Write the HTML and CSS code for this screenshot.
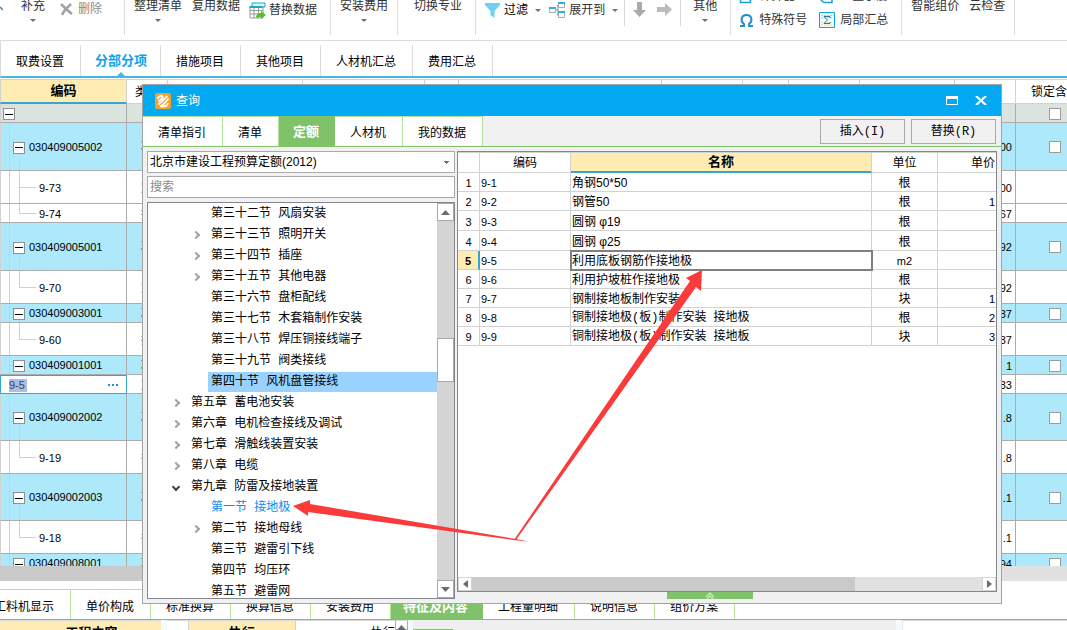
FILE: index.html
```html
<!DOCTYPE html>
<html lang="zh-CN">
<head>
<meta charset="utf-8">
<title>查询</title>
<link rel="stylesheet" href="styles.css">
</head>
<body>
<div class="app">
  <header class="ribbon">
    <div class="group g-edit">
      <svg class="cut" width="3" height="12" viewBox="0 0 3 12"><path d="M0 7l3 3" stroke="#4a7fa8" stroke-width="1.5"/></svg>
      <button class="tool stack">补充<i class="caret"></i></button>
      <button class="tool dim"><svg width="13" height="13" viewBox="0 0 13 13"><path d="M1 1c3 3 7 7 11 10M11 1C8 4 4 7 2 12" fill="none" stroke="#a3a3a3" stroke-width="2.6"/></svg>删除</button>
    </div>
    <div class="group g-list">
      <button class="tool stack">整理清单<i class="caret"></i></button>
      <button class="tool stack">复用数据</button>
      <button class="tool low tight"><svg width="17" height="17" viewBox="0 0 17 17"><path d="M1 5h13v11H1zM1 8.500h13M1 12h13M5 5v11M9.500 5v11" fill="#fff" stroke="#999"/><path d="M3 1h13v4H3z" fill="#d8f5fb" stroke="#19aacb"/><path d="M.5 4h13v2H.5z" fill="#19aacb"/><path d="M7 16c0-4 2-5 5-5V9l5 4-5 4v-2c-2 0-4 0-5 1z" fill="#55c12f"/></svg>替换数据</button>
    </div>
    <div class="group g-fee"><button class="tool stack">安装费用<i class="caret"></i></button></div>
    <div class="group g-major"><button class="tool stack">切换专业</button></div>
    <div class="group g-filter short">
      <button class="tool low strong"><svg width="15" height="15" viewBox="0 0 15 15"><path d="M0 0h15v2L9.500 8v7l-4-3V8L0 2z" fill="#6fd0f2"/></svg>过滤<i class="caret beside"></i></button>
      <button class="tool low"><svg width="16" height="16" viewBox="0 0 16 16"><path d="M6 8h3M9 3.500V13M8 3.500h2M8 13h2" stroke="#888" fill="none"/><g fill="#fff" stroke="#aaa"><path d="M.5 5.500h6v5h-6zM9.500 1.500h6v4h-6zM9.500 10.500h6v5h-6z"/></g><path d="M0 5h7v2H0zM9 0h7v2H9zM9 9h7v2H9z" fill="#2eb1e2"/></svg>展开到<i class="caret beside"></i></button>
    </div>
    <div class="group g-move short">
      <button class="tool" aria-label="下移"><svg width="13" height="15" viewBox="0 0 13 15"><path d="M4 0h5v8h4l-6.500 7L0 8h4z" fill="#aaa"/></svg></button>
      <button class="tool" aria-label="右移"><svg width="15" height="15" viewBox="0 0 15 15"><path d="M0 5h8V1l7 6.500L8 14v-4H0z" fill="#bcbcbc"/></svg></button>
    </div>
    <div class="group g-other"><button class="tool stack">其他<i class="caret"></i></button></div>
    <div class="group g-tools">
      <button class="tool"><svg width="15" height="15" viewBox="0 0 15 15"><path d="M1.500.5h10v13h-10z" fill="#fff" stroke="#19a0d8" stroke-width="1.500"/></svg>计算器</button>
      <button class="tool"><svg width="16" height="15" viewBox="0 0 16 15"><path d="M2 1h11v12.500H5L2 11z" fill="#fff" stroke="#19a0d8" stroke-width="1.500"/></svg>五金手册</button>
      <button class="tool"><svg width="15" height="15" viewBox="0 0 15 15"><path d="M1 13h4v-2C1 8 2 2 7.500 2S14 8 10 11v2h4" fill="none" stroke="#2390cc" stroke-width="2"/></svg>特殊符号</button>
      <button class="tool"><svg width="16" height="16" viewBox="0 0 16 16"><path d="M.5.5h15v15H.5z" fill="#eefaff" stroke="#0ba4e2"/><path d="M2 3.500h12M2 6h12" stroke="#8ed5f2" stroke-dasharray="2 1"/><path d="M2 10.500h12M2 13h12" stroke="#f0dba0" stroke-dasharray="2 1"/><path d="M11 6V4.500H5L8.500 8 5 11.500h6V10" fill="none" stroke="#3d7286"/></svg>局部汇总</button>
    </div>
    <div class="group g-cloud">
      <button class="tool stack">智能组价</button>
      <button class="tool stack">云检查</button>
    </div>
  </header>

  <nav class="tabs main-tabs">
    <button>取费设置</button><button class="on">分部分项</button><button>措施项目</button><button>其他项目</button><button>人材机汇总</button><button>费用汇总</button>
  </nav>

  <main class="sheet">
    <table class="bill">
      <colgroup><col class="c-code"><col class="c-type"><col class="c-w1"><col class="c-w2"><col class="c-w3"><col class="c-w4"><col class="c-w5"><col class="c-w6"><col class="c-w7"><col class="c-w8"><col class="c-sum"><col class="c-lock"></colgroup>
      <thead><tr><th class="key">编码</th><th>类别</th><th></th><th></th><th></th><th></th><th></th><th></th><th></th><th></th><th></th><th>锁定含量</th></tr></thead>
      <tbody>
        <tr class="root"><td><button class="fold" aria-label="折叠"></button></td><td></td><td colspan="8"></td><td></td><td><input type="checkbox" aria-label="锁定"></td></tr>
        <tr class="item tall"><td><button class="fold" aria-label="折叠"></button>030409005002</td><td>项</td><td colspan="8"></td><td>00</td><td><input type="checkbox" aria-label="锁定"></td></tr>
        <tr class="sub mid"><td>9-73</td><td>定</td><td colspan="8"></td><td>00</td><td></td></tr>
        <tr class="sub last"><td>9-74</td><td>换</td><td colspan="8"></td><td>67</td><td></td></tr>
        <tr class="item tall"><td><button class="fold" aria-label="折叠"></button>030409005001</td><td>项</td><td colspan="8"></td><td>92</td><td><input type="checkbox" aria-label="锁定"></td></tr>
        <tr class="sub mid last"><td>9-70</td><td>定</td><td colspan="8"></td><td>92</td><td></td></tr>
        <tr class="item"><td><button class="fold" aria-label="折叠"></button>030409003001</td><td>项</td><td colspan="8"></td><td>37</td><td><input type="checkbox" aria-label="锁定"></td></tr>
        <tr class="sub mid last"><td>9-60</td><td>换</td><td colspan="8"></td><td>37</td><td></td></tr>
        <tr class="item"><td><button class="fold" aria-label="折叠"></button>030409001001</td><td>项</td><td colspan="8"></td><td>1</td><td><input type="checkbox" aria-label="锁定"></td></tr>
        <tr class="editing"><td><div class="editor"><input type="text" value="9-5" aria-label="编码"><button aria-label="更多"><svg width="11" height="3" viewBox="0 0 11 3"><path d="M0 0h2v2H0zM4 0h2v2H4zM8 0h2v2H8z" fill="#2a8fd0"/></svg></button></div></td><td>定</td><td colspan="8"></td><td>33</td><td></td></tr>
        <tr class="item high"><td><button class="fold" aria-label="折叠"></button>030409002002</td><td>项</td><td colspan="8"></td><td>.8</td><td><input type="checkbox" aria-label="锁定"></td></tr>
        <tr class="sub mid last"><td>9-19</td><td>换</td><td colspan="8"></td><td>.8</td><td></td></tr>
        <tr class="item high"><td><button class="fold" aria-label="折叠"></button>030409002003</td><td>项</td><td colspan="8"></td><td>.1</td><td><input type="checkbox" aria-label="锁定"></td></tr>
        <tr class="sub mid last"><td>9-18</td><td>换</td><td colspan="8"></td><td>.1</td><td></td></tr>
        <tr class="item"><td><button class="fold" aria-label="折叠"></button>030409008001</td><td>项</td><td colspan="8"></td><td>94</td><td><input type="checkbox" aria-label="锁定"></td></tr>
      </tbody>
    </table>
  </main>
  <div class="sheet-scroll"><span></span></div>

  <nav class="tabs sub-tabs">
    <button>工料机显示</button><button>单价构成</button><button>标准换算</button><button>换算信息</button><button>安装费用</button><button class="on">特征及内容</button><button>工程量明细</button><button>说明信息</button><button>组价方案</button>
  </nav>
  <footer class="detail">
    <div class="d-content">工程内容</div>
    <div class="d-mark"></div>
    <div class="d-name">执行</div>
    <div class="d-value">执行</div>
    <div class="d-up"><svg width="9" height="5" viewBox="0 0 9 5"><path d="M0 5l4.500-5L9 5z" fill="#666b78"/></svg></div>
    <div class="d-panel"><span></span></div>
    <div class="d-rest"></div>
  </footer>
</div>

<section class="dialog" role="dialog" aria-label="查询">
  <header class="title">
    <svg width="16" height="16" viewBox="0 0 16 16"><rect width="16" height="16" rx="2" fill="#f7a02c"/><path d="M2.500 6c1-3 4-4 5-2.500S5 7 3.500 8.500M3.500 11.500L12.500 3M5 13.500c3-1 7-6 8.500-8M6 13.500c4 .5 7-1 7-3.500" fill="none" stroke="#fff" stroke-width="1.800"/></svg>
    <h1>查询</h1>
    <button aria-label="最大化"><svg width="12" height="9" viewBox="0 0 12 9"><path d="M.5.5h11v8H.5z" fill="none" stroke="#fff"/><path d="M0 0h12v3H0z" fill="#fff"/></svg></button>
    <button aria-label="关闭"><svg width="12" height="9" viewBox="0 0 12 9"><path d="M1 0l10 9M11 0L1 9" stroke="#fff" stroke-width="2.200"/></svg></button>
  </header>
  <div class="bar">
    <nav class="tabs pick-tabs"><button>清单指引</button><button>清单</button><button class="on">定额</button><button>人材机</button><button>我的数据</button></nav>
    <div class="actions"><button>插入(I)</button><button>替换(R)</button></div>
  </div>
  <div class="body">
    <div class="side">
      <select aria-label="定额库"><option>北京市建设工程预算定额(2012)</option></select>
      <input class="search" type="text" placeholder="搜索" aria-label="搜索">
      <div class="tree">
        <ul>
          <li class="sec">第三十二节 风扇安装</li>
          <li class="sec more">第三十三节 照明开关</li>
          <li class="sec more">第三十四节 插座</li>
          <li class="sec more">第三十五节 其他电器</li>
          <li class="sec">第三十六节 盘柜配线</li>
          <li class="sec">第三十七节 木套箱制作安装</li>
          <li class="sec">第三十八节 焊压铜接线端子</li>
          <li class="sec">第三十九节 阀类接线</li>
          <li class="sec picked"><span>第四十节 风机盘管接线</span></li>
          <li class="more">第五章 蓄电池安装</li>
          <li class="more">第六章 电机检查接线及调试</li>
          <li class="more">第七章 滑触线装置安装</li>
          <li class="more">第八章 电缆</li>
          <li class="more open">第九章 防雷及接地装置</li>
          <li class="sec current">第一节 接地极</li>
          <li class="sec more">第二节 接地母线</li>
          <li class="sec">第三节 避雷引下线</li>
          <li class="sec">第四节 均压环</li>
          <li class="sec">第五节 避雷网</li>
        </ul>
        <div class="vscroll">
          <button aria-label="向上"><svg width="9" height="5" viewBox="0 0 9 5"><path d="M0 5l4.500-5L9 5z" fill="#666b78"/></svg></button>
          <div class="track"><span></span></div>
          <button aria-label="向下"><svg width="9" height="5" viewBox="0 0 9 5"><path d="M0 0l4.500 5L9 0z" fill="#666b78"/></svg></button>
        </div>
      </div>
    </div>
    <div class="result">
      <div class="pane">
        <table class="quota">
          <colgroup><col class="q-no"><col class="q-code"><col><col class="q-unit"><col class="q-price"></colgroup>
          <thead><tr><th></th><th>编码</th><th class="key">名称</th><th>单位</th><th class="price">单价</th></tr></thead>
          <tbody>
            <tr><td>1</td><td>9-1</td><td>角钢50*50</td><td>根</td><td></td></tr>
            <tr><td>2</td><td>9-2</td><td>钢管50</td><td>根</td><td>1</td></tr>
            <tr class="roomy"><td>3</td><td>9-3</td><td>圆钢 φ19</td><td>根</td><td></td></tr>
            <tr class="roomy"><td>4</td><td>9-4</td><td>圆钢 φ25</td><td>根</td><td></td></tr>
            <tr class="active"><td>5</td><td>9-5</td><td>利用底板钢筋作接地极</td><td class="latin">m2</td><td></td></tr>
            <tr><td>6</td><td>9-6</td><td>利用护坡桩作接地极</td><td>根</td><td></td></tr>
            <tr><td>7</td><td>9-7</td><td>钢制接地板制作安装</td><td>块</td><td>1</td></tr>
            <tr><td>8</td><td>9-8</td><td class="wide">铜制接地极(板)制作安装 接地极</td><td>根</td><td>2</td></tr>
            <tr><td>9</td><td>9-9</td><td class="wide">铜制接地极(板)制作安装 接地板</td><td>块</td><td>3</td></tr>
          </tbody>
        </table>
        <div class="hscroll">
          <button aria-label="向左"><svg width="5" height="8" viewBox="0 0 5 8"><path d="M5 0L0 4l5 4z" fill="#666b78"/></svg></button>
          <div class="track"><span></span></div>
          <button aria-label="向右"><svg width="5" height="8" viewBox="0 0 5 8"><path d="M0 0l5 4-5 4z" fill="#666b78"/></svg></button>
        </div>
      </div>
      <button class="handle" aria-label="展开"><svg width="10" height="7" viewBox="0 0 10 7"><path d="M1 5l4-4 4 4M2 7l3-3 3 3" fill="none" stroke="#c9ecbd" stroke-width="1.300"/></svg></button>
    </div>
  </div>
</section>

<svg class="marks" width="1067" height="630" viewBox="0 0 1067 630" aria-hidden="true">
  <g fill="#fb3b39"><path d="M293 506l17-6v4l206 35 13 2.500-16-1.500L308 512v4z"/><path d="M702 270l-16 8 4 3-176 259h2l180-253 5 4z"/></g>
</svg>
</body>
</html>
```
FILE: styles.css
```css
*, *::before, *::after { box-sizing: border-box; }

html, body { height: 100%; }

body {
  position: relative;
  margin: 0;
  overflow: hidden;
  background: #fff;
  color: #000;
  font: 12px/14px "Liberation Sans", "Noto Sans CJK SC", sans-serif;
}

button, input, select { font: inherit; color: inherit; margin: 0; }

button {
  border: 0;
  padding: 0;
  background: none;
  white-space: nowrap;
}

svg { display: block; flex: none; }

.app {
  display: flex;
  flex-direction: column;
  height: 100%;
}

/* ribbon */
.ribbon {
  display: flex;
  flex: none;
  height: 41px;
  overflow: hidden;
  border-bottom: 1px solid #dcdcdc;
  color: #333;
}

.group {
  display: flex;
  align-items: flex-start;
  flex: none;
  height: 35px;
  border-right: 1px solid #dcdcdc;
}

.group.short { height: 26px; }

.tool {
  display: flex;
  align-items: center;
  gap: 6px;
  height: 18px;
  line-height: 12px;
}

.tool.stack {
  flex-direction: column;
  height: 22px;
}

.tool.low { height: 20px; }
.tool.tight { gap: 3px; }
.tool.dim { color: #8c8c8c; }
.tool.strong { color: #000; }

.caret {
  border: 3px solid transparent;
  border-top-color: #6b6f7c;
  border-bottom: 0;
}

.stack .caret { margin-top: 1px; }
.caret.beside { margin-left: 3px; }

.g-edit { padding-right: 22px; }
.g-edit .cut { margin-right: 18px; }
.g-edit .dim { margin-left: 15px; gap: 5px; }
.g-list { gap: 10px; padding: 0 13px 0 9px; }
.g-list .low { margin-left: -1px; }
.g-fee { padding: 0 9px; }
.g-major { padding: 0 13px 0 16px; }
.g-filter { gap: 8px; padding: 0 6px 0 9px; }
.g-filter .tool { gap: 4px; }
.g-move { gap: 11px; padding: 2px 8px; }
.g-move .tool { height: 15px; }
.g-other { padding: 0 13px 0 12px; }

.g-tools {
  display: grid;
  grid-template-columns: auto auto;
  grid-template-rows: 24px 18px;
  column-gap: 12px;
  margin-top: -13px;
  height: 48px;
  padding: 0 13px 0 8px;
}

.g-tools .tool { gap: 5px; }
.g-cloud { gap: 10px; padding: 0 9px; }

/* tab strips */
.tabs { display: flex; flex: none; }

.tabs button {
  padding: 0 16px 0 15px;
  border-right: 1px solid #dcdcdc;
}

.main-tabs {
  height: 37px;
  padding-top: 4px;
  border-bottom: 2px solid #45b8df;
  border-left: 1px solid #dcdcdc;
}

.main-tabs button { padding-top: 2px; }

.main-tabs .on {
  position: relative;
  padding: 0 13px 0 14px;
  color: #0da3ee;
  font-size: 13px;
  font-weight: bold;
}

.main-tabs .on::after {
  content: "";
  position: absolute;
  left: 50%;
  bottom: 0;
  margin-left: -4px;
  border: 4px solid transparent;
  border-bottom-color: #45b8df;
  border-top: 0;
}

.sub-tabs {
  height: 31px;
  margin: 8px 0 0 -21px;
  border-bottom: 1px solid #7fc26c;
}

.sub-tabs button, .pick-tabs button {
  border-right-color: #b4e39f;
  border-top: 1px solid #b4e39f;
  background: #fff;
}

.pick-tabs button { padding-top: 2px; }
.sub-tabs button { padding-top: 4px; }

.sub-tabs .on, .pick-tabs .on {
  background: #80c26a;
  border-color: #80c26a;
  color: #fff;
  font-size: 13px;
  font-weight: bold;
}

.sub-tabs .on { padding: 4px 14px 0 12px; }
.pick-tabs .on { padding: 0 15px 0 14px; }

/* bill sheet */
.sheet {
  flex: 1;
  min-height: 0;
  overflow: hidden;
  margin-top: 1px;
  border-top: 1px solid #d2d2d2;
}

.bill, .quota {
  border-collapse: separate;
  border-spacing: 0;
  table-layout: fixed;
}

.bill { width: 1095px; }
.c-code { width: 127px; }
.c-type { width: 41px; }
.c-w1 { width: 135px; }
.c-w2 { width: 122px; }
.c-w3 { width: 34px; }
.c-w4 { width: 203px; }
.c-w5 { width: 81px; }
.c-w6 { width: 46px; }
.c-w7 { width: 71px; }
.c-w8 { width: 95px; }
.c-sum { width: 61px; }
.c-lock { width: 79px; }

.bill th {
  height: 24px;
  padding: 0;
  border-right: 1px solid #d2d2d2;
  border-bottom: 1px solid #d2d2d2;
  font-weight: normal;
}

.bill .key {
  border-left: 1px solid #d2d2d2;
  border-bottom: 2px solid #37a5d2;
  background: #ffecb3;
  font-size: 13px;
  font-weight: bold;
}

.bill td {
  height: 19px;
  padding: 1px 0 0;
  border-right: 1px solid #acacac;
  border-bottom: 1px solid #acacac;
  font-size: 11px;
  line-height: 12px;
  text-align: center;
}

.bill td:first-child {
  border-left: 1px solid #d2d2d2;
  text-align: left;
}

.bill td:nth-child(2) { font-size: 12px; }

.bill td:nth-child(4) {
  padding-right: 3px;
  text-align: right;
}

.bill .tall td { height: 48px; }
.bill .high td { height: 47px; }
.bill .mid td { height: 33px; }
.root td { background: #dae3de; }
.item td { background-color: #ade8fb; }
.root td:first-child { padding-left: 2px; }

.item td:first-child {
  padding-left: 12px;
  background-image: linear-gradient(#d0d0d0, #d0d0d0), linear-gradient(#d0d0d0, #d0d0d0), linear-gradient(#d0d0d0, #d0d0d0);
  background-repeat: no-repeat;
  background-position: 8px 0, 8px 50%, 18px 100%;
  background-size: 1px 100%, 4px 1px, 1px 50%;
}

.sub td:first-child {
  padding-left: 38px;
  background-image: linear-gradient(#d0d0d0, #d0d0d0), linear-gradient(#d0d0d0, #d0d0d0), linear-gradient(#d0d0d0, #d0d0d0);
  background-repeat: no-repeat;
  background-position: 8px 0, 18px 0, 18px 50%;
  background-size: 1px 100%, 1px 100%, 17px 1px;
}

.sub.last td:first-child { background-size: 1px 100%, 1px 50%, 17px 1px; }

.fold {
  width: 12px;
  height: 12px;
  margin-right: 4px;
  border: 1px solid #8f8f8f;
  background: linear-gradient(#000, #000) 50% 50% / 8px 1px no-repeat #fff;
  vertical-align: -2px;
}

.bill input[type="checkbox"] {
  appearance: none;
  display: block;
  width: 12px;
  height: 12px;
  margin: 0 auto;
  border: 1px solid #9c9c9c;
  background: #fff;
}

.bill .editing td:first-child { border: 1px solid #37a5d2; }

.editor {
  display: flex;
  align-items: center;
  justify-content: space-between;
  padding: 0 7px 0 8px;
}

.editor input {
  width: 18px;
  height: 13px;
  padding: 0;
  border: 0;
  background: #a5bfea;
  color: #444;
}

.sheet-scroll {
  flex: none;
  height: 15px;
  background: #e1e1e1;
}

.sheet-scroll span {
  display: block;
  width: 60%;
  height: 100%;
  background: #cacaca;
}

/* lower detail grid */
.detail {
  display: flex;
  flex: none;
  height: 10px;
  overflow: hidden;
  background: #f3fafb;
  font-size: 13px;
  font-weight: bold;
  line-height: 24px;
  text-align: center;
}

.detail > div { border-top: 1px solid #d8d8d8; }

.d-content {
  width: 161px;
  padding-left: 22px;
  background: #ffecb3;
}

.d-mark {
  width: 22px;
  margin-left: 6px;
  border-right: 1px solid #d2d2d2;
  background: #fff;
}

.d-name {
  width: 107px;
  border-right: 1px solid #d2d2d2;
  background: #ffecb3;
}

.d-value {
  width: 99px;
  background: #fff;
  font-size: 12px;
  font-weight: normal;
  text-align: right;
}

.d-up {
  width: 13px;
  padding: 4px 1px 0;
  border: 1px solid #aaa;
  background: #fff;
}

.detail .d-panel {
  flex: 1;
  margin-left: 5px;
  border-top: 0;
  background: #efefef;
}

.d-panel span {
  display: block;
  width: 40px;
  height: 1px;
  margin-top: 9px;
  background: #80c26a;
}

.d-rest {
  width: 165px;
  margin-left: 6px;
  border-left: 1px solid #e8e8e8;
  background: #fff;
}

/* query window, floating over the sheet */
.dialog {
  position: absolute;
  top: 84px;
  right: 65px;
  bottom: 26px;
  left: 142px;
  display: flex;
  flex-direction: column;
  border: 1px solid #a3a3a3;
  background: #f1f1f1;
}

.title {
  display: flex;
  align-items: center;
  flex: none;
  height: 31px;
  padding: 0 14px 0 12px;
  background: #03a9f1;
  color: #fff;
}

.title h1 {
  flex: 1;
  margin: 0 0 0 5px;
  font-size: 12px;
  font-weight: normal;
}

.title button + button { margin-left: 17px; }

.bar {
  display: flex;
  justify-content: space-between;
  flex: none;
  height: 31px;
  border-bottom: 1px solid #80c26a;
}

.actions {
  display: flex;
  gap: 6px;
  padding: 3px 5px 2px 0;
}

.actions button {
  width: 85px;
  border: 1px solid #a9a9a9;
  font-family: "Liberation Mono", "Noto Sans CJK SC", monospace;
}

.body {
  display: flex;
  flex: 1;
  gap: 2px;
  min-height: 0;
  padding: 4px;
}

.side {
  display: flex;
  flex-direction: column;
  flex: none;
  width: 308px;
}

.side select, .search {
  height: 22px;
  padding: 0 2px;
  border: 1px solid #a9a9a9;
  border-radius: 0;
  background: #fff;
}

.side select {
  appearance: none;
  background: linear-gradient(#6b6f7c, #6b6f7c) right 5px top 9px / 5px 1px no-repeat, linear-gradient(#6b6f7c, #6b6f7c) right 6px top 10px / 3px 1px no-repeat, linear-gradient(#6b6f7c, #6b6f7c) right 7px top 11px / 1px 1px no-repeat #fff;
}

.search { margin: 3px 0 4px; }
.search::placeholder { color: #8a8a8a; opacity: 1; }

.tree {
  display: flex;
  flex: 1;
  min-height: 0;
  border: 1px solid #83868f;
  background: #fff;
}

.tree ul {
  flex: 1;
  margin: 0;
  padding: 0;
  overflow: hidden;
  list-style: none;
  font-family: "Liberation Mono", "Noto Sans CJK SC", monospace;
}

.tree li {
  display: flex;
  align-items: center;
  height: 21px;
  padding-left: 25px;
}

.tree .sec { padding-left: 45px; }

.tree li::before {
  content: "";
  flex: none;
  width: 6px;
  height: 6px;
  margin: 0 12px 0 0;
}

.tree .more::before {
  border: solid #a3a3a3;
  border-width: 2px 2px 0 0;
  transform: rotate(45deg);
}

.tree .open::before {
  border-color: #444;
  transform: rotate(135deg);
}

.tree .picked::before { margin-right: 9px; }

.picked span {
  flex: 1;
  padding-left: 3px;
  background: #99d1ff;
  line-height: 20px;
}

.tree .current { color: #0a8cf0; }

.vscroll {
  display: flex;
  flex-direction: column;
  flex: none;
  width: 17px;
}

.vscroll button, .hscroll button {
  display: grid;
  place-items: center;
  flex: none;
  border: 1px solid #a9a9a9;
  background: #fff;
}

.vscroll button { height: 18px; }

.vscroll .track {
  display: grid;
  grid-template-rows: 118fr 44fr 199fr;
  flex: 1;
  background: #d4d4d4;
}

.vscroll span {
  grid-row: 2;
  border: 1px solid #a9a9a9;
  background: #fff;
}

.result {
  display: flex;
  flex-direction: column;
  flex: 1;
  min-width: 0;
}

.pane {
  display: flex;
  flex-direction: column;
  justify-content: space-between;
  flex: 1;
  min-height: 0;
  border: 1px solid #83868f;
  background: #fff;
}

.quota { width: 100%; }
.q-no { width: 22px; }
.q-code { width: 91px; }
.q-unit { width: 66px; }
.q-price { width: 58px; }

.quota th, .quota td {
  height: 19px;
  padding: 2px 1px 0;
  border-right: 1px solid #d2d2d2;
  border-bottom: 1px solid #d2d2d2;
  line-height: 14px;
  white-space: nowrap;
}

.quota th {
  height: 21px;
  padding-top: 0;
  border-top: 1px solid #d2d2d2;
  font-weight: normal;
}

.quota .key {
  border-bottom: 2px solid #37a5d2;
  background: #ffecb3;
  font-size: 13px;
  font-weight: bold;
}

.quota .price { text-align: right; }
.quota td { text-align: left; }
.quota .roomy td { height: 20px; }
.quota td:nth-child(1), .quota td:nth-child(4) { text-align: center; }
.quota td:nth-child(5) { text-align: right; }

.quota td:nth-child(1), .quota td:nth-child(2), .quota td:nth-child(5), .quota .latin { font-size: 11px; }
.quota .wide { font-family: "Liberation Mono", "Noto Sans CJK SC", monospace; }
.quota th:last-child, .quota td:last-child { border-right: 0; }

.quota .active td:first-child {
  border-right: 2px solid #37a5d2;
  background: #ffecb3;
  font-weight: bold;
}

.quota .active td:nth-child(3) {
  outline: 2px solid #808080;
  outline-offset: -1px;
}

.hscroll {
  display: flex;
  height: 14px;
}

.hscroll button {
  width: 14px;
  border-color: #d4d4d4;
}

.hscroll .track {
  flex: 1;
  background: #e1e1e1;
}

.hscroll span {
  display: block;
  width: 75%;
  height: 100%;
  background: #cacaca;
}

.handle {
  display: grid;
  place-items: center;
  width: 86px;
  height: 7px;
  margin-left: 210px;
  background: #80c26a;
}

.marks {
  position: absolute;
  top: 0;
  left: 0;
  pointer-events: none;
}
```
